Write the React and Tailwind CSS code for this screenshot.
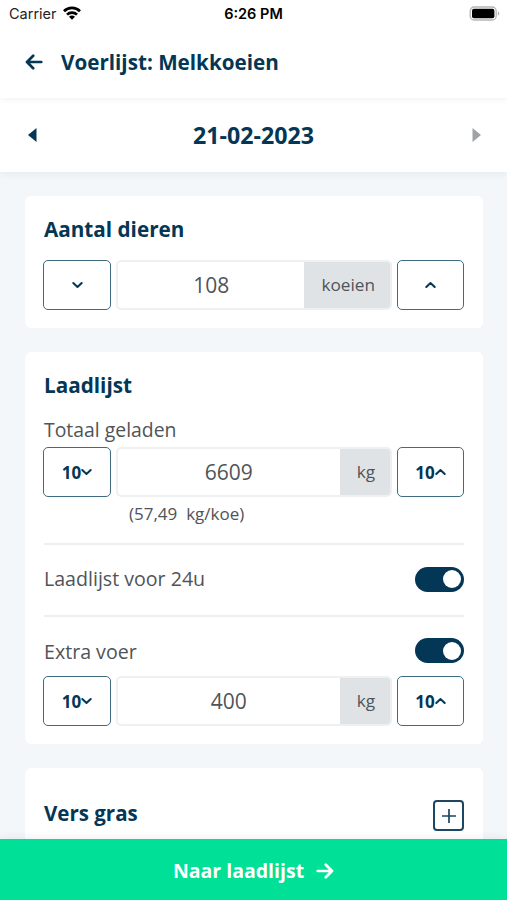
import React, { useState } from "react";

const ArrowIcon = ({ className }) => (
  <svg viewBox="0 0 18 16" className={className} fill="none" stroke="currentColor" strokeWidth="2.7" strokeLinecap="round" strokeLinejoin="round">
    <path d="M16.3 8H2.4M8.2 1.8L2 8l6.2 6.2" />
  </svg>
);

const Chevron = ({ up }) => (
  <svg viewBox="0 0 11 8" className="w-[11px] h-2" fill="none" stroke="currentColor" strokeWidth="2" strokeLinecap="round" strokeLinejoin="round">
    <path d={up ? "M1.3 6L5.5 2l4.2 4" : "M1.3 2l4.2 4 4.2-4"} />
  </svg>
);

const StepButton = ({ step, up, onClick }) => (
  <button
    onClick={onClick}
    className={`flex h-[50px] shrink-0 items-center justify-center rounded-[5px] border-[1.5px] border-[#416b83] bg-white text-[17px] font-bold text-[#043655] ${up ? "w-[67px]" : "w-[68px]"}`}
  >
    {step && <span className="leading-none">{step}</span>}
    <Chevron up={up} />
  </button>
);

const Stepper = ({ value, unit, step, onChange }) => {
  const amount = step || 1;
  return (
    <div className="flex h-[50px] gap-[5px]">
      <StepButton step={step} onClick={() => onChange(value - amount)} />
      <div className="flex min-w-0 flex-1 overflow-hidden rounded-[5px] border-2 border-[#eff0f1]">
        <div className="flex flex-1 items-center justify-center pt-px text-[21px] text-[#4f5458]">{value}</div>
        <div className="-my-0.5 -mr-0.5 flex items-center bg-[#dfe3e6] px-[17px] text-[17.2px] text-[#4f5458]">{unit}</div>
      </div>
      <StepButton step={step} up onClick={() => onChange(value + amount)} />
    </div>
  );
};

const Toggle = ({ on, onClick }) => (
  <button
    onClick={onClick}
    className={`flex h-[25px] w-[49px] items-center rounded-full px-[3px] ${on ? "justify-end bg-[#043655]" : "justify-start bg-gray-300"}`}
  >
    <span className="h-[18px] w-[18px] rounded-full bg-white" />
  </button>
);

const StatusBar = () => (
  <div className="grid h-7 grid-cols-3 items-center pl-[9px] pr-[7px] text-[14.5px] text-[#222] font-['Inter',sans-serif]">
    <div className="flex items-center gap-1.5">
      <span>Carrier</span>
      <svg viewBox="0 0 18 14" className="-mt-0.5 h-[14px] w-[18px]" fill="none" stroke="#000" strokeWidth="2.7">
        <path d="M1 5.2a11.4 11.4 0 0 1 16 0" />
        <path d="M4 8.6a7.2 7.2 0 0 1 10 0" />
        <path d="M9 13.8L6 10.8a4.2 4.2 0 0 1 6 0z" fill="#000" stroke="none" />
      </svg>
    </div>
    <span className="-ml-0.5 text-center font-semibold text-black">6:26 PM</span>
    <svg viewBox="0 0 31 15" className="-mt-0.5 h-[15px] w-[31px] justify-self-end">
      <rect x="1.2" y="1" width="26" height="13" rx="4" fill="#fff" stroke="#b5b5b5" strokeWidth="1.3" />
      <rect x="3" y="2.8" width="22.4" height="9.4" rx="2" fill="#000" />
      <path d="M28.8 5.4c2 .6 2 3.6 0 4.2z" fill="#b5b5b5" />
    </svg>
  </div>
);

const App = () => {
  const [animals, setAnimals] = useState(108);
  const [loaded, setLoaded] = useState(6609);
  const [extra, setExtra] = useState(400);
  const [fullDay, setFullDay] = useState(true);
  const [extraFeed, setExtraFeed] = useState(true);

  return (
    <div className="flex h-[900px] flex-col overflow-hidden bg-[#f3f7fa] text-[#4f5458] font-['Open_Sans',sans-serif]">
      {/* Header */}
      <header className="z-20 h-[98px] shrink-0 bg-white shadow-[0_2px_6px_rgba(0,0,0,0.05)]">
        <StatusBar />
        <div className="flex h-[68px] items-center gap-[18px] pl-[25px] text-[#043655]">
          <ArrowIcon className="h-4 w-[18px]" />
          <h1 className="text-[20.65px] font-bold">Voerlijst: Melkkoeien</h1>
        </div>
      </header>

      {/* Date picker */}
      <div className="z-10 flex h-[74px] shrink-0 items-center justify-between bg-white pl-7 pr-[26px] shadow-[0_2px_8px_rgba(0,0,0,0.06)]">
        <svg viewBox="0 0 9 14" className="h-[14px] w-[9px]">
          <path d="M8.5 0v14L0 7z" fill="#043655" />
        </svg>
        <span className="-ml-0.5 text-[23.2px] font-bold text-[#043655]">21-02-2023</span>
        <svg viewBox="0 0 9 14" className="h-[14px] w-[9px]">
          <path d="M.5 0v14L9 7z" fill="#a0a3a5" />
        </svg>
      </div>

      <main className="flex min-h-0 flex-1 flex-col gap-6 overflow-hidden px-[25px] pt-6 pr-6">
        <section className="h-[132px] shrink-0 rounded-md bg-white pr-[19px] pl-[18px] pt-[18px]">
          <h2 className="mb-4 ml-px text-[20.7px] leading-[30px] font-bold text-[#043655]">Aantal dieren</h2>
          <Stepper value={animals} unit="koeien" onChange={setAnimals} />
        </section>

        <section className="h-[392px] shrink-0 rounded-md bg-white pr-[19px] pl-[18px] pt-[18px]">
          <h2 className="ml-px text-[20.7px] leading-[30px] font-bold text-[#043655]">Laadlijst</h2>
          <div className="mt-[15px] mb-[3px] ml-px text-[19.4px] leading-[29px]">Totaal geladen</div>
          <Stepper value={loaded} unit="kg" step={10} onChange={setLoaded} />
          <div className="mt-1 ml-[86px] h-[42px] text-[17px] leading-[26px] whitespace-pre">(57,49  kg/koe)</div>
          <div className="ml-px flex h-[74px] items-center justify-between border-y-2 border-[#eceeef] pb-0.5 text-[19.6px]">
            <span>Laadlijst voor 24u</span>
            <Toggle on={fullDay} onClick={() => setFullDay(!fullDay)} />
          </div>
          <div className="mt-[21px] mb-[13px] ml-px flex h-[25px] items-center justify-between text-[19.6px]">
            <span className="pt-0.5">Extra voer</span>
            <Toggle on={extraFeed} onClick={() => setExtraFeed(!extraFeed)} />
          </div>
          <Stepper value={extra} unit="kg" step={10} onChange={setExtra} />
        </section>

        <section className="flex h-[120px] shrink-0 items-start justify-between rounded-md bg-white pr-[19px] pl-[19px] pt-8">
          <h2 className="-mt-px text-[20.5px] leading-[28px] font-bold text-[#043655]">Vers gras</h2>
          <button className="flex h-[31px] w-[31px] items-center justify-center rounded-[4px] border-2 border-[#1c4662]">
            <svg viewBox="0 0 14 14" className="h-[14px] w-[14px]" stroke="#1c4662" strokeWidth="1.7">
              <path d="M7 0v14M0 7h14" />
            </svg>
          </button>
        </section>
      </main>

      {/* Bottom action */}
      <button className="z-10 flex h-[61px] shrink-0 items-center justify-center gap-3 bg-[#00e096] pt-0.5 text-[19.5px] font-bold text-white shadow-[0_-2px_8px_rgba(0,0,0,0.06)]">
        <span>Naar laadlijst</span>
        <ArrowIcon className="h-4 w-[18px] rotate-180" />
      </button>
    </div>
  );
};

export default App;
